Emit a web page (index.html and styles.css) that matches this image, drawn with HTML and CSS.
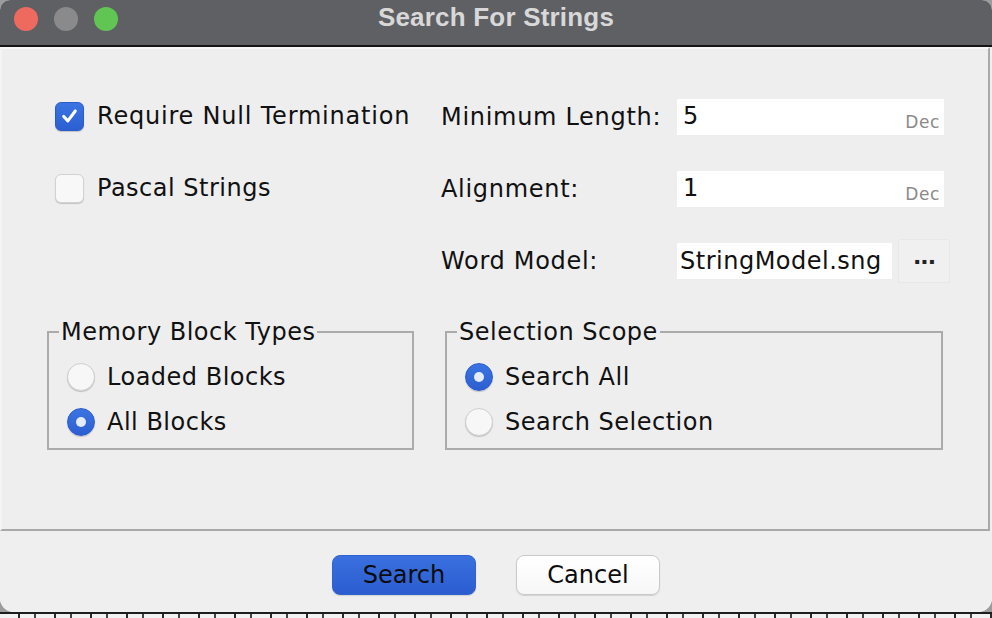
FILE: index.html
```html
<!DOCTYPE html>
<html lang="en">
<head>
<meta charset="utf-8">
<title>Search For Strings</title>
<link rel="stylesheet" href="styles.css">
</head>
<body>
<div class="window">
  <header class="titlebar">
    <div class="lights">
      <span class="light red"></span>
      <span class="light gray"></span>
      <span class="light green"></span>
    </div>
    <div class="title">Search For Strings</div>
    <div class="spacer"></div>
  </header>

  <main class="panel">
    <section class="top">
      <label class="check-row">
        <span class="checkbox checked">
          <svg viewBox="0 0 28 28" width="28" height="28"><path d="M8 14.5 L12.3 19 L20 8.8" fill="none" stroke="#fff" stroke-width="3.2" stroke-linecap="round" stroke-linejoin="round"/></svg>
        </span>
        <span class="text wide">Require Null Termination</span>
      </label>
      <div class="label">Minimum Length:</div>
      <div class="field"><span class="value">5</span><span class="radix">Dec</span></div>

      <label class="check-row">
        <span class="checkbox"></span>
        <span class="text">Pascal Strings</span>
      </label>
      <div class="label">Alignment:</div>
      <div class="field"><span class="value">1</span><span class="radix">Dec</span></div>

      <div class="empty"></div>
      <div class="label">Word Model:</div>
      <div class="model">
        <div class="field model-field"><span class="value">StringModel.sng</span></div>
        <button class="browse">&middot;&middot;&middot;</button>
      </div>
    </section>

    <section class="groups">
      <fieldset class="group memory">
        <legend>Memory Block Types</legend>
        <div class="options">
          <label class="radio-row"><span class="radio"></span><span class="text">Loaded Blocks</span></label>
          <label class="radio-row"><span class="radio selected"></span><span class="text">All Blocks</span></label>
        </div>
      </fieldset>
      <fieldset class="group scope">
        <legend>Selection Scope</legend>
        <div class="options">
          <label class="radio-row"><span class="radio selected"></span><span class="text">Search All</span></label>
          <label class="radio-row"><span class="radio"></span><span class="text">Search Selection</span></label>
        </div>
      </fieldset>
    </section>
  </main>

  <footer class="buttons">
    <button class="btn primary">Search</button>
    <button class="btn">Cancel</button>
  </footer>
</div>
<div class="under"></div>
</body>
</html>
```

FILE: styles.css
```css
* { box-sizing: border-box; }

html, body {
  margin: 0;
  padding: 0;
  width: 992px;
  height: 618px;
  overflow: hidden;
}

body {
  background: #9c9c9c;
  font-family: "DejaVu Sans", "Noto Sans", sans-serif;
  color: #111;
}

.window {
  width: 992px;
  height: 612px;
  background: #efefef;
  border-radius: 10px 10px 14px 14px;
  overflow: hidden;
  display: flex;
  flex-direction: column;
}

/* ---------- title bar ---------- */
.titlebar {
  height: 47px;
  flex: none;
  background: #5f6064;
  border-bottom: 2px solid #151515;
  display: grid;
  grid-template-columns: 1fr auto 1fr;
  align-items: center;
  padding-bottom: 10px;
}

.lights {
  display: flex;
  gap: 16px;
  padding-left: 14px;
  padding-top: 2px;
}

.light {
  width: 24px;
  height: 24px;
  border-radius: 50%;
}
.light.red { background: #ee6a5f; }
.light.gray { background: #8a8a8d; }
.light.green { background: #61c554; }

.title {
  font-family: "Liberation Sans", Arial, sans-serif;
  font-weight: bold;
  font-size: 26px;
  letter-spacing: 0.2px;
  color: #d8d8d9;
}

/* ---------- main panel ---------- */
.panel {
  flex: none;
  height: 484px;
  margin-right: 2px;
  background: #eeeeee;
  border-top: 2px solid #f7f7f7;
  border-left: 2px solid #f4f4f4;
  border-right: 2px solid #a9a9a9;
  border-bottom: 2px solid #a9a9a9;
  padding-top: 32px;
}

.top {
  margin-left: 53px;
  display: grid;
  grid-template-columns: 386px 236px auto;
  grid-auto-rows: 72px;
  align-items: center;
  font-size: 24px;
  letter-spacing: 0.5px;
}

.check-row {
  display: flex;
  align-items: center;
  gap: 13px;
  margin-top: -2px;
}

.check-row .wide {
  letter-spacing: 0.8px;
}

.checkbox {
  width: 29px;
  height: 29px;
  border-radius: 6px;
  background: #f8f8f8;
  border: 1px solid #d2d2d2;
  box-shadow: 0 1px 1px rgba(0, 0, 0, 0.18);
  display: flex;
  align-items: center;
  justify-content: center;
}

.checkbox.checked {
  background: linear-gradient(#3b74e2, #2c5fd1);
  border-color: #2b5ccb;
}

.label {
  white-space: nowrap;
  letter-spacing: 0.7px;
}

.field {
  width: 267px;
  height: 36px;
  background: #ffffff;
  display: flex;
  justify-content: space-between;
  align-items: flex-end;
  padding: 0 4px 3px 6px;
}

.field .value {
  line-height: 32px;
}

.radix {
  font-size: 17px;
  color: #8a8a8a;
  letter-spacing: 0.6px;
  line-height: 20px;
}

.model {
  display: flex;
  align-items: center;
  gap: 6px;
}

.model-field {
  width: 215px;
  height: 36px;
  padding-left: 3px;
  align-items: center;
  padding-bottom: 0;
}

.browse {
  width: 52px;
  height: 44px;
  border: 1px solid #e8e8e8;
  background: #f0f0f0;
  border-radius: 2px;
  font-family: "DejaVu Sans", sans-serif;
  font-size: 22px;
  font-weight: bold;
  color: #222;
  padding: 0;
  letter-spacing: -1px;
}

/* ---------- groups ---------- */
.groups {
  display: flex;
  gap: 31px;
  margin: 22px 0 0 45px;
  font-size: 24px;
  letter-spacing: 0.5px;
}

.group {
  margin: 0;
  border: 2px solid #ababab;
  padding: 9px 10px 4px;
}

.group.memory { width: 367px; }
.group.scope { width: 498px; }

.group legend {
  padding: 0 2px;
  line-height: 26px;
}

.options {
  display: flex;
  flex-direction: column;
  padding-left: 8px;
}

.radio-row {
  height: 45px;
  display: flex;
  align-items: center;
  gap: 12px;
}

.radio {
  width: 28px;
  height: 28px;
  border-radius: 50%;
  background: #f7f7f7;
  border: 1px solid #d0d0d0;
  box-shadow: 0 1px 1px rgba(0, 0, 0, 0.18);
  display: flex;
  align-items: center;
  justify-content: center;
}

.radio.selected {
  background: linear-gradient(#3b74e2, #2c5fd1);
  border-color: #2b5ccb;
}

.radio.selected::after {
  content: "";
  width: 10px;
  height: 10px;
  border-radius: 50%;
  background: #e4ebfa;
}

/* ---------- footer ---------- */
.buttons {
  flex: 1;
  display: flex;
  justify-content: center;
  align-items: flex-start;
  gap: 40px;
  padding-top: 24px;
  background: #efefef;
}

.btn {
  width: 144px;
  height: 40px;
  border-radius: 8px;
  font-family: "DejaVu Sans", sans-serif;
  font-size: 24px;
  color: #0c0c0c;
  background: linear-gradient(#ffffff, #f7f7f7);
  border: 1px solid #c9c9c9;
  box-shadow: 0 1px 1px rgba(0, 0, 0, 0.12);
  padding: 0;
}

.btn.primary {
  background: linear-gradient(#3a70e0, #2b5dcf);
  border-color: #2f62d3;
}

/* ---------- background below dialog ---------- */
.under {
  height: 6px;
  border-top: 2px solid #1d1d1d;
  background: repeating-linear-gradient(90deg, #f2f2f2 0 18px, #2a2a2a 18px 20px, #f2f2f2 20px 34px, #444 34px 36px);
}
```
